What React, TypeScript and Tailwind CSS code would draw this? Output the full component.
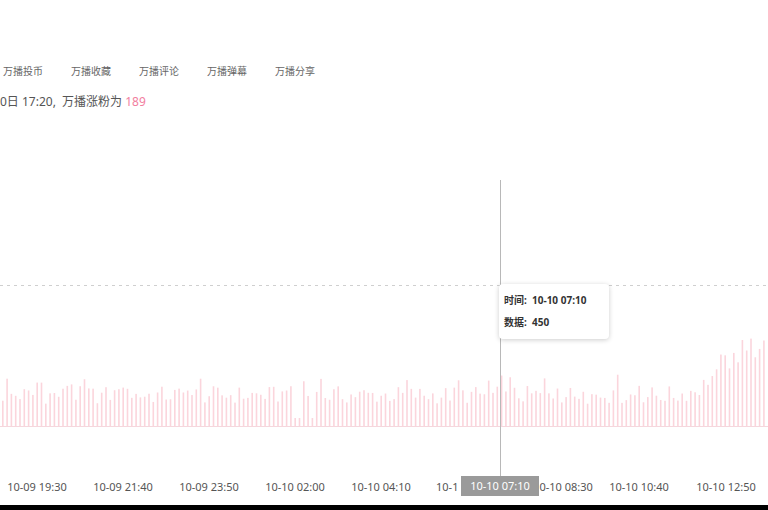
import React from "react";

const N = 178;
function rand(i: number) {
  const x = Math.sin(i * 12.9898 + 78.233) * 43758.5453;
  return x - Math.floor(x);
}
const bars = Array.from({ length: N }, (_, i) => {
  const x = 2 + i * 4.3;
  let h = 22 + rand(i) * 18;
  if (rand(i + 300) > 0.85) h += 12;
  if (x > 680) h += (x - 680) * 0.8 * (0.4 + 0.6 * rand(i + 50));
  if (x > 290 && x < 320 && rand(i + 9) > 0.5) h = 8;
  return { x, h };
});
const labels = [
  ["10-09 19:30", 37],
  ["10-09 21:40", 123],
  ["10-09 23:50", 209],
  ["10-10 02:00", 295],
  ["10-10 04:10", 381],
  ["10-10 08:30", 563],
  ["10-10 10:40", 639],
  ["10-10 12:50", 726],
] as const;

export default function App() {
  return (
    <div className="relative w-[768px] h-[510px] bg-white overflow-hidden" style={{ fontFamily: '"Noto Sans", "Noto Sans CJK SC", sans-serif' }}>
      <div className="flex pt-[63px] pl-[3px] text-[10px] text-[#666] gap-[28px] leading-[16px]">
        <span>万播投币</span><span>万播收藏</span><span>万播评论</span><span>万播弹幕</span><span>万播分享</span>
      </div>
      <div className="pt-[15px] text-[12px] text-[#555] leading-[16px]">
        0日 17:20,&nbsp;&nbsp;万播涨粉为 <span className="text-[#f27ea0]">189</span>
      </div>
      <svg className="absolute left-0 top-0" width="768" height="505">
        <line x1="0" y1="285.5" x2="768" y2="285.5" stroke="#cfcfcf" strokeDasharray="3 4" />
        {bars.map((b, i) => (
          <rect key={i} x={b.x} y={426 - b.h} width="1.6" height={b.h} fill="#fbd5dc" />
        ))}
        <line x1="0" y1="426.5" x2="768" y2="426.5" stroke="#f5d7dd" />
        <line x1="500.5" y1="180" x2="500.5" y2="495" stroke="#b8b8b8" />
      </svg>
      {labels.map(([t, x]) => (
        <div key={t} className="absolute top-[479px] text-[11px] text-[#555] -translate-x-1/2 whitespace-nowrap" style={{ left: x }}>{t}</div>
      ))}
      <div className="absolute top-[479px] left-[436px] text-[11px] text-[#555]">10-1</div>
      <div className="absolute left-[461px] top-[476px] w-[78px] h-[20px] bg-[#9a9a9a] text-white text-[11px] flex items-center justify-center">10-10 07:10</div>
      <div className="absolute left-[499px] top-[284px] w-[110px] h-[55px] bg-white shadow-[0_1px_5px_rgba(0,0,0,0.2)] rounded-sm px-[5px] pt-[5px] text-[10px] font-bold text-[#333] leading-[22px]">
        <div>时间:&nbsp;&nbsp;10-10 07:10</div>
        <div>数据:&nbsp;&nbsp;450</div>
      </div>
      <div className="absolute left-0 bottom-0 w-full h-[5px] bg-black" />
    </div>
  );
}
